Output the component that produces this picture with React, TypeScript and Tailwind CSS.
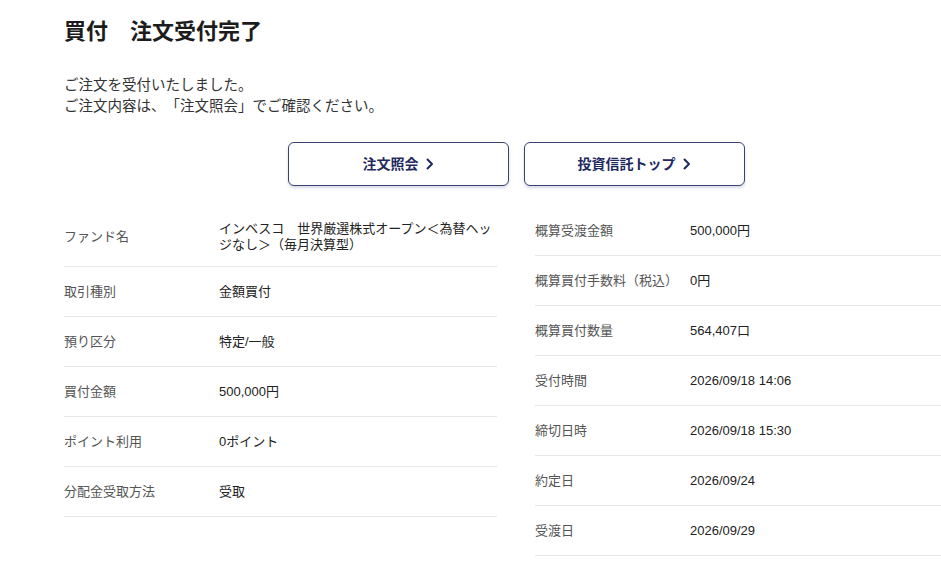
const leftRows: [string, string][] = [
  ["ファンド名", "インベスコ　世界厳選株式オープン＜為替ヘッジなし＞（毎月決算型）"],
  ["取引種別", "金額買付"],
  ["預り区分", "特定/一般"],
  ["買付金額", "500,000円"],
  ["ポイント利用", "0ポイント"],
  ["分配金受取方法", "受取"],
];

const rightRows: [string, string][] = [
  ["概算受渡金額", "500,000円"],
  ["概算買付手数料（税込）", "0円"],
  ["概算買付数量", "564,407口"],
  ["受付時間", "2026/09/18 14:06"],
  ["締切日時", "2026/09/18 15:30"],
  ["約定日", "2026/09/24"],
  ["受渡日", "2026/09/29"],
];

function Chevron() {
  return (
    <svg width="8" height="12" viewBox="0 0 8 12" className="ml-[7px]">
      <path d="M1.5 1.5 L6 6 L1.5 10.5" fill="none" stroke="currentColor" strokeWidth="2" strokeLinecap="round" strokeLinejoin="round" />
    </svg>
  );
}

function LinkButton({ label }: { label: string }) {
  return (
    <button className="w-[221px] h-[44px] flex items-center justify-center rounded-[6px] border border-[#3a4275] bg-white text-[#1f2a5e] text-[14px] font-bold shadow-[0_2px_3px_rgba(40,50,110,0.18)]">
      {label}
      <Chevron />
    </button>
  );
}

function Row({ label, value, first }: { label: string; value: string; first?: boolean }) {
  return (
    <div
      className={`flex items-center border-b border-[#e6e6e6] ${first ? "h-[61px] pt-[1px]" : "h-[50px]"}`}
    >
      <div className="w-[155px] shrink-0 text-[13px] text-[#555]">{label}</div>
      <div className={`flex-1 text-[13px] text-[#222] ${first ? "leading-[16px]" : ""}`}>{value}</div>
    </div>
  );
}

export default function App() {
  return (
    <div
      className="w-[941px] h-[563px] overflow-hidden bg-white [text-spacing-trim:space-all]"
      style={{ fontFamily: '"Liberation Sans", "Noto Sans CJK JP", sans-serif' }}
    >
      <div className="w-[904px] ml-[64px] pt-[16px]">
        <h1 className="text-[22px] leading-[32px] font-bold text-[#1c1c1c]">買付　注文受付完了</h1>
        <div className="mt-[27px] text-[14.5px] leading-[21px] text-[#333]">
          <p>ご注文を受付いたしました。</p>
          <p>ご注文内容は、「注文照会」でご確認ください。</p>
        </div>
        <div className="mt-[25px] flex justify-center gap-[15px]">
          <LinkButton label="注文照会" />
          <LinkButton label="投資信託トップ" />
        </div>
        <div className="mt-[20px] flex gap-[38px]">
          <div className="w-[433px]">
            {leftRows.map(([l, v], i) => (
              <Row key={l} label={l} value={v} first={i === 0} />
            ))}
          </div>
          <div className="w-[433px]">
            {rightRows.map(([l, v]) => (
              <Row key={l} label={l} value={v} />
            ))}
          </div>
        </div>
      </div>
    </div>
  );
}
